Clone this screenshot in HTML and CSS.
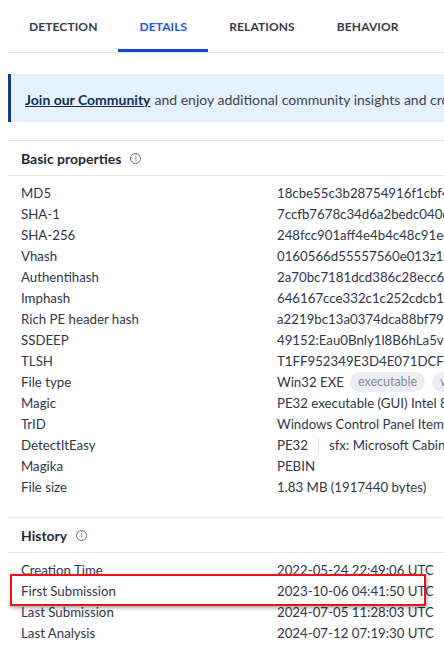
FILE: index.html
```html
<!DOCTYPE html>
<html>
<head>
<meta charset="utf-8">
<link rel="stylesheet" href="styles.css">
</head>
<body>
<div class="page">
  <nav class="tabs">
    <div class="tab">DETECTION</div>
    <div class="tab active">DETAILS</div>
    <div class="tab">RELATIONS</div>
    <div class="tab">BEHAVIOR</div>
  </nav>

  <div class="banner"><a class="banner-link">Join our Community</a> and enjoy additional community insights and crowdsourced detections</div>

  <section class="card">
    <header class="card-head">Basic properties <span class="info">i</span></header>
    <div class="rows">
      <div class="row"><span class="k">MD5</span><span class="v">18cbe55c3b28754916f1cbf4dc6e2b09</span></div>
      <div class="row"><span class="k">SHA-1</span><span class="v">7ccfb7678c34d6a2bedc040da5e11c9f28bd07e3</span></div>
      <div class="row"><span class="k">SHA-256</span><span class="v">248fcc901aff4e4b4c48c91e4d5b7e0f6a3c8e2d</span></div>
      <div class="row"><span class="k">Vhash</span><span class="v">0160566d55557560e013z1004</span></div>
      <div class="row"><span class="k">Authentihash</span><span class="v">2a70bc7181dcd386c28ecc6429f1a0d5e7b3</span></div>
      <div class="row"><span class="k">Imphash</span><span class="v">646167cce332c1c252cdcb183f2e5a9c</span></div>
      <div class="row"><span class="k">Rich PE header hash</span><span class="v">a2219bc13a0374dca88bf79d9e5a2c1b</span></div>
      <div class="row"><span class="k">SSDEEP</span><span class="v">49152:Eau0Bnly1l8B6hLa5vMqZ3x</span></div>
      <div class="row"><span class="k">TLSH</span><span class="v">T1FF952349E3D4E071DCF86B2</span></div>
      <div class="row"><span class="k">File type</span><span class="v">Win32 EXE <span class="chip">executable</span><span class="chip">windows</span></span></div>
      <div class="row"><span class="k">Magic</span><span class="v">PE32 executable (GUI) Intel 80386, for MS Windows</span></div>
      <div class="row"><span class="k">TrID</span><span class="v">Windows Control Panel Item (generic)</span></div>
      <div class="row"><span class="k">DetectItEasy</span><span class="v">PE32 <span class="sep"></span> sfx: Microsoft Cabinet</span></div>
      <div class="row"><span class="k">Magika</span><span class="v">PEBIN</span></div>
      <div class="row"><span class="k">File size</span><span class="v">1.83 MB (1917440 bytes)</span></div>
    </div>
  </section>

  <section class="card">
    <header class="card-head">History <span class="info">i</span></header>
    <div class="rows">
      <div class="row"><span class="k">Creation Time</span><span class="v">2022-05-24 22:49:06 UTC</span></div>
      <div class="row highlight"><span class="k">First Submission</span><span class="v">2023-10-06 04:41:50 UTC</span></div>
      <div class="row"><span class="k">Last Submission</span><span class="v">2024-07-05 11:28:03 UTC</span></div>
      <div class="row"><span class="k">Last Analysis</span><span class="v">2024-07-12 07:19:30 UTC</span></div>
    </div>
  </section>
</div>
</body>
</html>
```

FILE: styles.css
```css
html, body {
  margin: 0;
  padding: 0;
  background: #ffffff;
  overflow: hidden;
}
body {
  font-family: "Lato", "Liberation Sans", sans-serif;
  color: #2f374b;
  font-size: 13.25px;
}
.page {
  padding-left: 8px;
  width: 700px;
  white-space: nowrap;
}
.tabs {
  display: flex;
  height: 52px;
  border-bottom: 1px solid #e3e7ef;
}
.tab {
  box-sizing: border-box;
  height: 52px;
  padding: 4px 21px 0;
  display: flex;
  align-items: center;
  font-size: 12px;
  font-weight: 700;
  letter-spacing: 0.1px;
  color: #363b47;
  border-bottom: 3px solid transparent;
}
.tab.active {
  color: #2257de;
  border-bottom-color: #1247d6;
}
.banner {
  margin-top: 21px;
  height: 48px;
  box-sizing: border-box;
  background: #e5f1fc;
  border-left: 3px solid #0d3f80;
  padding-left: 14px;
  display: flex;
  align-items: center;
  padding-top: 2px;
  font-size: 14px;
  color: #3b4256;
}
.banner-link {
  font-weight: 700;
  color: #0f2f5c;
  text-decoration: underline;
  margin-right: 4px;
}
.card {
  margin-top: 18px;
  border-top: 1px solid #e3e7ef;
}
.card + .card {
  margin-top: 20px;
}
.card-head {
  height: 35px;
  box-sizing: border-box;
  display: flex;
  align-items: center;
  padding-left: 13px;
  font-weight: 700;
  font-size: 14px;
  color: #242a3a;
  border-bottom: 1px solid #e3e7ef;
}
.info {
  display: inline-flex;
  align-items: center;
  justify-content: center;
  width: 9px;
  height: 9px;
  border: 1px solid #6b7080;
  border-radius: 50%;
  font-size: 8px;
  font-weight: 400;
  color: #6b7080;
  margin-left: 9px;
  font-family: "DejaVu Sans", sans-serif;
}
.rows {
  padding-top: 6px;
}
.row {
  height: 21px;
  display: flex;
  align-items: center;
  padding-left: 13px;
}
.k {
  width: 256px;
  flex: none;
}
.v {
  display: flex;
  align-items: center;
}
.chip {
  display: inline-flex;
  align-items: center;
  height: 20px;
  padding: 0 8px;
  margin-left: 6px;
  border-radius: 10px;
  background: #eceef3;
  color: #868b9c;
  font-size: 12.5px;
}
.chip + .chip {
  margin-left: 7px;
}
.sep {
  display: inline-block;
  width: 1px;
  height: 16px;
  background: #dfe2ea;
  margin: 0 10px;
}
.highlight {
  position: relative;
  z-index: 1;
}
.highlight::before {
  content: "";
  position: absolute;
  z-index: -1;
  left: 2px;
  top: -6px;
  width: 412px;
  height: 28px;
  background: #ffffff;
  border: 2px solid #e8141b;
  box-shadow: 1px 2px 4px rgba(0, 0, 0, 0.35);
}
```
